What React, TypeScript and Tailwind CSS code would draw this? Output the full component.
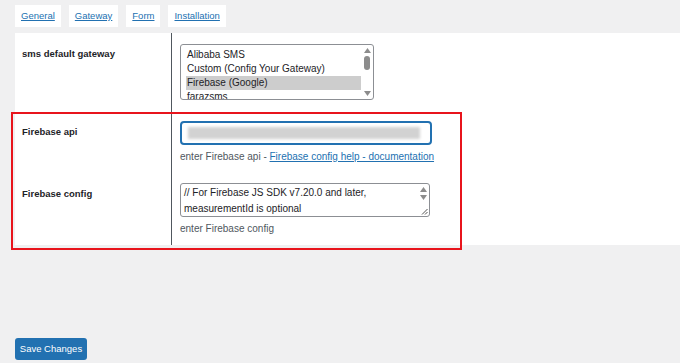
const font = { fontFamily: '"Liberation Sans", Arial, sans-serif' };

const tabs = ["General", "Gateway", "Form", "Installation"];
const options = ["Alibaba SMS", "Custom (Config Your Gateway)", "Firebase (Google)", "farazsms"];

const Arrow = ({ up }: { up?: boolean }) => (
  <svg width="7" height="5" viewBox="0 0 7 5" className="block">
    <path d={up ? "M0 5 L3.5 0 L7 5 Z" : "M0 0 L3.5 5 L7 0 Z"} fill="#8c8c8c" />
  </svg>
);

const App = () => {
  return (
    <div
      className="relative w-[680px] h-[363px] bg-[#f0f0f1] overflow-hidden text-[#1d2327]"
      style={font}
    >
      {/* tabs */}
      <div className="flex gap-[8px] pl-[15px] pt-[5px]">
        {tabs.map((t) => (
          <div
            key={t}
            className="h-[22px] px-[6px] bg-white flex items-center text-[9.5px] text-[#2271b1] underline"
          >
            {t}
          </div>
        ))}
      </div>

      {/* settings table */}
      <div className="ml-[15px] mt-[6px] h-[212px] bg-white flex">
        <div className="w-[157px] border-r border-[#50575e] flex flex-col">
          <div className="h-[78px] pl-[7px] pt-[14px] text-[9.5px] font-bold">sms default gateway</div>
          <div className="h-[62px] pl-[7px] pt-[14px] text-[9.5px] font-bold">Firebase api</div>
          <div className="pl-[7px] pt-[14px] text-[9.5px] font-bold">Firebase config</div>
        </div>

        <div className="flex-1 pl-[8px] flex flex-col">
          {/* select list */}
          <div className="mt-[11px] w-[194px] h-[56px] border border-[#8c8f94] rounded-[3px] flex overflow-hidden">
            <div className="flex-1 pl-[5px] pt-[3px] text-[10px] leading-[14px]">
              {options.map((o, i) => (
                <div key={o} className={i === 2 ? "bg-[#cdcdcd] pl-[1px]" : "pl-[1px]"}>
                  {o}
                </div>
              ))}
            </div>
            <div className="w-[12px] flex flex-col items-center pt-[3px] pb-[3px] justify-between">
              <Arrow up />
              <div className="w-[6px] h-[14px] rounded-[3px] bg-[#8c8c8c] -mt-[18px]" />
              <Arrow />
            </div>
          </div>

          {/* api input */}
          <div className="mt-[21px] w-[252px] h-[24px] border-2 border-[#2271b1] rounded-[4px] px-[6px] flex items-center">
            <div className="w-[232px] h-[12px] bg-[#d2d2d2] blur-[1.5px]" />
          </div>
          <div className="mt-[4px] text-[10px] text-[#50575e]">
            enter Firebase api -{" "}
            <span className="text-[#2271b1] underline">Firebase config help - documentation</span>
          </div>

          {/* config textarea */}
          <div className="mt-[19px] w-[250px] h-[34px] border border-[#8c8f94] rounded-[3px] flex overflow-hidden">
            <div className="flex-1 pl-[3px] pt-[1px] text-[10px] leading-[16px]">
              // For Firebase JS SDK v7.20.0 and later,
              <br />
              measurementId is optional
            </div>
            <div className="w-[12px] flex flex-col items-center pt-[3px] gap-[3px] relative">
              <Arrow up />
              <Arrow />
              <svg width="7" height="7" viewBox="0 0 7 7" className="absolute bottom-[1px] right-[1px]">
                <path d="M6.5 1 L1 6.5 M6.5 4 L4 6.5" stroke="#555" strokeWidth="1" />
              </svg>
            </div>
          </div>
          <div className="mt-[4px] text-[10px] text-[#50575e]">enter Firebase config</div>
        </div>
      </div>

      {/* annotation highlight */}
      <div className="absolute left-[11px] top-[112px] w-[451px] h-[138px] border-2 border-[#e8141c] pointer-events-none" />

      {/* save button */}
      <div className="absolute left-[15px] top-[338px] w-[72px] h-[22px] bg-[#2271b1] rounded-[3px] text-white text-[9.5px] flex items-center justify-center">
        Save Changes
      </div>
    </div>
  );
};

export default App;
